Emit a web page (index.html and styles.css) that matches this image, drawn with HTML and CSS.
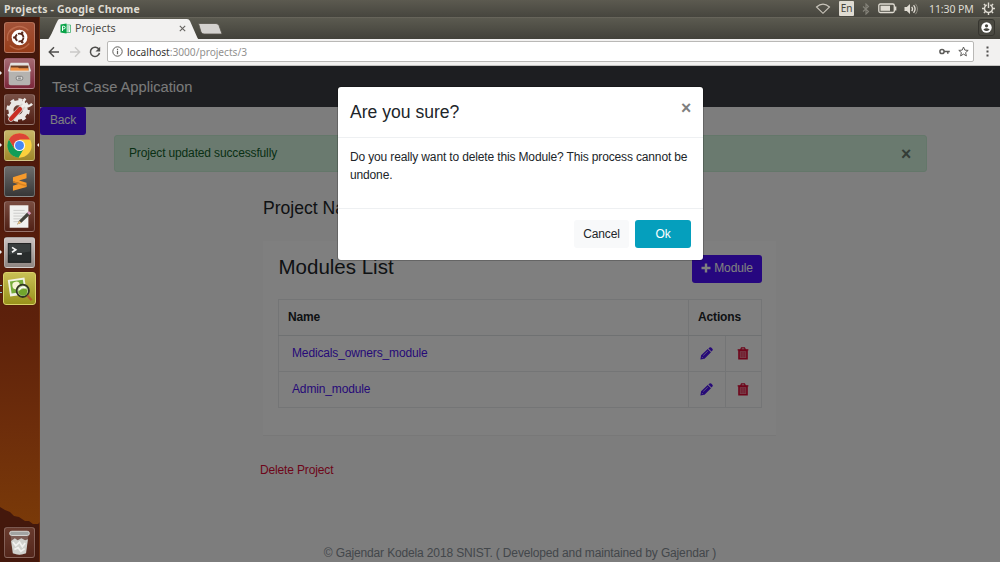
FILE: index.html
```html
<!DOCTYPE html>
<html lang="en">
<head>
<meta charset="utf-8">
<title>Projects</title>
<link rel="stylesheet" href="styles.css">
</head>
<body>
<header class="panel">
  <div class="panel-title">Projects - Google Chrome</div>
  <div class="indicators">
    <svg class="i-wifi" width="16" height="12" viewBox="0 0 16 12"><path d="M1.500 4Q8-1.800 14.500 4L8 10.300z" fill="none" stroke="#c9c5bb" stroke-width="1.100"/></svg>
    <span class="lang">En</span>
    <svg class="i-bt" width="8" height="12" viewBox="0 0 8 12"><path d="M1 3.500L6.500 8.500 4 11V1L6.500 3.500 1 8.500" fill="none" stroke="#85837a" stroke-width="1.100"/></svg>
    <svg class="i-bat" width="19" height="11" viewBox="0 0 19 11"><rect x=".8" y="1" width="15.500" height="8.500" rx="1.500" fill="none" stroke="#dfdbd2" stroke-width="1.300"/><rect x="2.500" y="2.700" width="9.500" height="5.100" fill="#dfdbd2"/><path d="M17.600 3.500v4" stroke="#dfdbd2" stroke-width="1.500"/></svg>
    <svg class="i-vol" width="15" height="12" viewBox="0 0 15 12"><path d="M.5 4h2.300L6 1v10L2.800 8H.5z" fill="#dfdbd2"/><path d="M7.700 3.800q1.700 2.200 0 4.400M9.600 2.200q3 3.800 0 7.600" fill="none" stroke="#dfdbd2" stroke-width="1.300"/><path d="M11.500.8q4 5.200 0 10.400" fill="none" stroke="#8b887e"/></svg>
    <span class="clock">11:30 PM</span>
    <svg class="i-gear" width="13" height="13" viewBox="0 0 13 13"><path d="M4.700 2.900A4 4 0 1 0 8.300 2.900" fill="none" stroke="#dfdbd2" stroke-width="1.400"/><path d="M6.500 .5v5.500M6.500 10.500V13M0 6.500h2.500M10.500 6.500H13M1.900 1.900l1.800 1.800M9.300 3.700l1.800-1.800M1.900 11.100l1.800-1.800M9.300 9.300l1.800 1.800" stroke="#dfdbd2" stroke-width="1.400"/></svg>
  </div>
</header>

<div class="desktop">
  <nav class="launcher">
    <svg class="wallpaper" width="40" height="545" viewBox="0 0 40 545" preserveAspectRatio="none">
      <defs><linearGradient id="wall" x2="0" y2="1"><stop offset="0" stop-color="#42180c"/><stop offset=".3" stop-color="#511a0c"/><stop offset=".56" stop-color="#5d210b"/><stop offset=".75" stop-color="#6d2d0b"/><stop offset=".95" stop-color="#7b3b08"/></linearGradient></defs>
      <path d="M0 0h40v545H0z" fill="url(#wall)"/><path d="M0 490l5 3 5 2 4 4 5 1 6 4 4 0 4 3 5 0 2-2v40H0z" fill="#44180c"/><path d="M39.500 0v545" stroke="#7b3c16" opacity=".6"/>
    </svg>
    <div class="tile t-dash"><svg viewBox="0 0 31 31"><path d="M5 9Q15-1 25 8M26 22Q16 33 5 24M3 19Q1 9 10 5" fill="none" stroke="#d58868" stroke-width="1.500" opacity=".5"/><circle cx="15.500" cy="15.500" r="8.400" fill="#fff"/><circle cx="15.500" cy="15.500" r="4.200" fill="none" stroke="#58281c" stroke-width="2" stroke-dasharray="7.600 1.200"/><circle cx="9.900" cy="15.500" r="1.300" fill="#58281c"/><circle cx="18.400" cy="10.500" r="1.300" fill="#58281c"/><circle cx="18.400" cy="20.500" r="1.300" fill="#58281c"/></svg></div>
    <div class="tile t-files run"><svg viewBox="0 0 31 31"><path d="M6 4h19l3 9H3z" fill="#e2e1df"/><path d="M6 7h19v7H6z" fill="#6d3d22"/><path d="M6 9h8l1 1h10v4H6z" fill="#ef9144"/><path d="M4 13h23v13q0 2-2 2H6q-2 0-2-2z" fill="#b5b3b0"/><path d="M4 13h23" stroke="#efeeec"/><rect x="12" y="18.500" width="7" height="4" rx="1.500" fill="#d7d6d4" stroke="#777"/><path d="M14 20.500h3" stroke="#666"/></svg></div>
    <div class="tile t-settings"><svg viewBox="0 0 31 31"><circle cx="14" cy="16" r="7.700" fill="none" stroke="#e9e7e5" stroke-width="5.500"/><circle cx="14" cy="16" r="10.800" fill="none" stroke="#e9e7e5" stroke-width="3.500" stroke-dasharray="4.200 4.280"/><path d="M6.500 25.500L19 12" stroke="#d5d2cf" stroke-width="6" stroke-linecap="round"/><path d="M6.500 25.500L16 15" stroke="#c92d24" stroke-width="4.500" stroke-linecap="round"/><path d="M18 13l4-4M22 4q-4 3-1 6.500t8-1" fill="none" stroke="#efeeec" stroke-width="2.800"/></svg></div>
    <div class="tile t-chrome run focus"><svg viewBox="0 0 31 31"><circle cx="15.500" cy="15.500" r="13" fill="#fbd03d"/><path d="M4.200 9A13 13 0 0 1 26.800 9H15.500L9.800 18.700z" fill="#dc4437"/><path d="M4.200 9A13 13 0 0 0 14.500 28.500l5.600-9.800H9.800z" fill="#109d58"/><circle cx="15.500" cy="15.500" r="6" fill="#f7f7f7"/><circle cx="15.500" cy="15.500" r="4.800" fill="#4587f3"/></svg></div>
    <div class="tile t-sublime"><svg viewBox="0 0 31 31"><path d="M8.500 11L23 6.500v5.500L15 14.500l8 2.300v4.700L8.500 25.500V20l8-2.500-8-2.300z" fill="#f69a2c"/><path d="M8.500 15.200l14.500 4v2L8.500 16.500z" fill="#d98320"/></svg></div>
    <div class="tile t-edit"><svg viewBox="0 0 31 31"><path d="M5 3.500h20v24H5z" fill="#f0f0ee"/><path d="M9 9h12M9 12h13M9 15h11M9 18h8M9 21h6" stroke="#c9c9c7"/><path d="M13 24l2-4 9-9 2.500 2.500-9 8.800z" fill="#44443d"/><path d="M13 24l2-4 2.500 2.300z" fill="#eac386"/><path d="M23.500 11.500l2-2 2.500 2.500-2 2z" fill="#d79abb"/></svg></div>
    <div class="tile t-term run"><svg viewBox="0 0 31 31"><rect x="3.500" y="6" width="24" height="20" fill="#292d2d" stroke="#141717"/><path d="M4 6.500h23v8L4 18z" fill="#454949" opacity=".6"/><path d="M7.500 10l4 2.500-4 2.800M13 17h5" fill="none" stroke="#f5f5f5" stroke-width="1.800"/></svg></div>
    <div class="tile t-shot run2"><svg viewBox="0 0 31 31"><g transform="rotate(-8 13 13)"><path d="M4 5h18v18H4z" fill="#f1f2e3"/><path d="M6 7h14v13H6z" fill="#76ac3b"/><circle cx="12" cy="12" r="4" fill="#f6f4d4"/></g><circle cx="19" cy="18" r="6.600" fill="#c1d49d" stroke="#303423" stroke-width="1.900"/><path d="M14 19q5-5 10-2l-1 5q-5 3-8-1z" fill="#71a52d"/><path d="M15 17q4-5 7-2" fill="none" stroke="#fff" stroke-width="1.500"/><path d="M24 23l4.500 5" stroke="#b35c2a" stroke-width="2.500"/></svg></div>
    <div class="tile t-trash"><svg viewBox="0 0 31 31"><path d="M6 8l2 19q7 3 14 0l3-19z" fill="#ada9a5" opacity=".35"/><path d="M6.500 14l4-3 3 2 4-2 4 2 3-1-2 15q-7 3-14 0z" fill="#d0d1cd"/><path d="M8.500 15l3 4 4-4 3 5 3-4M10 23l4-2 3 4 4-3" fill="none" stroke="#f1f1ef" stroke-width="1.800"/><rect x="5" y="3.500" width="21" height="4.500" rx="2.200" fill="#a2a4a2" stroke="#dcdddb"/></svg></div>
  </nav>

  <main class="browser">
    <div class="tabstrip">
      <svg class="tab-shape" width="190" height="22" viewBox="0 0 190 22"><path d="M7.500 22C11 19 15 7 18 2Q18.500 1 20 1H147Q149 1 150 3L157.500 20 159 22z" fill="#f2f1f0"/><path d="M158.500 5.500h17.500q2 0 3 2l3 8.500H164q-2 0-3-2z" fill="#d4d2cf" stroke="#555249" stroke-width=".8"/></svg>
      <div class="tab">
        <svg width="11" height="11" viewBox="0 0 11 11"><path d="M6 2h4.500v7.500H6z" fill="#fff" stroke="#25a65b" stroke-width=".7"/><path d="M.5 1.500L6.500.5v10L.5 9.500z" fill="#08a348"/><path d="M2.500 8V3.200h1.300a1.300 1.300 0 0 1 0 2.700H2.500" fill="none" stroke="#fff"/><path d="M7 4h2.500M7 6h2.500M7 8h2" stroke="#25a65b" stroke-width=".7"/></svg>
        <span class="tab-name">Projects</span>
        <svg width="7" height="7" viewBox="0 0 7 7"><path d="M.8.8l5.400 5.400M6.200.8L.8 6.200" stroke="#65635f" stroke-width="1.100"/></svg>
      </div>
      <div class="profile"><svg width="11" height="11" viewBox="0 0 11 11"><circle cx="5.500" cy="5.500" r="5.200" fill="#fff"/><circle cx="5.500" cy="3.800" r="1.600" fill="#45443d"/><path d="M2.300 7.500q3.200-2.300 6.400 0-3.200 3-6.400 0" fill="#45443d"/></svg></div>
    </div>
    <div class="toolbar">
      <svg width="12" height="12" viewBox="0 0 12 12"><path d="M11 6H1.500M6 1.300L1.300 6 6 10.700" fill="none" stroke="#4f4e4c" stroke-width="1.500"/></svg>
      <svg width="12" height="12" viewBox="0 0 12 12"><path d="M1 6h9.500M6 1.300L10.700 6 6 10.700" fill="none" stroke="#cac9c7" stroke-width="1.400"/></svg>
      <svg width="12" height="12" viewBox="0 0 12 12"><path d="M10 3.500A4.600 4.600 0 1 0 10.500 7" fill="none" stroke="#4f4e4c" stroke-width="1.500"/><path d="M11.200.8v4.700H6.500z" fill="#4f4e4c"/></svg>
      <div class="omnibox">
        <svg width="11" height="11" viewBox="0 0 11 11"><circle cx="5.500" cy="5.500" r="4.700" fill="none" stroke="#605f5c"/><path d="M5.500 4.800v3.400M5.500 2.700v1.200" stroke="#605f5c" stroke-width="1.200"/></svg>
        <span class="url"><b>localhost</b>:3000/projects/3</span>
        <svg width="11" height="7" viewBox="0 0 11 7"><circle cx="3" cy="3.500" r="2.100" fill="none" stroke="#5c5b59" stroke-width="1.500"/><path d="M5 3.500h5.800M8.800 3.500v2.300" stroke="#5c5b59" stroke-width="1.500"/></svg>
        <svg width="11" height="11" viewBox="0 0 11 11"><path d="M5.500 1l1.300 3.100 3.400.3-2.600 2.200.8 3.300-2.900-1.800-2.900 1.800.8-3.300L.8 4.400l3.400-.3z" fill="none" stroke="#5c5b59"/></svg>
      </div>
      <svg class="dots" width="3" height="11" viewBox="0 0 3 11"><path d="M.500.500h2v2h-2zM.5 4.500h2v2h-2zM.5 8.500h2v2h-2z" fill="#4f4e4c"/></svg>
    </div>

    <div class="page">
      <div class="navbar">Test Case Application</div>
      <div class="back-row"><a class="btn btn-primary back">Back</a></div>
      <div class="alert"><span>Project updated successfully</span><span class="close">×</span></div>
      <h4 class="project-name">Project Name</h4>
      <section class="card">
        <div class="card-head">
          <h3 class="card-title">Modules List</h3>
          <a class="btn btn-primary add"><svg width="10" height="10" viewBox="0 0 10 10"><path d="M5 .500v9M.5 5h9" stroke="#fff" stroke-width="2.400"/></svg>Module</a>
        </div>
        <table class="modules">
          <colgroup><col class="c-name"><col class="c-act"><col class="c-act"></colgroup>
          <thead><tr><th>Name</th><th colspan="2">Actions</th></tr></thead>
          <tbody>
            <tr><td class="name">Medicals_owners_module</td>
              <td class="act"><svg width="13" height="13" viewBox="0 0 13 13"><path d="M.4 12.600l.7-4.400 6.600-6.200 3.300 3.300-6.500 6.400zM8.400 1.400L9.500.5q.9-.6 1.700.1l1.200 1.200q.8.900 0 1.800l-.9 1z" fill="#4d13f0"/><path d="M3.200 8.500l4.600-4.300M2 10.100l1.100 1.100" stroke="#cfc2fb" stroke-width=".8"/></svg></td>
              <td class="act"><svg width="12" height="13" viewBox="0 0 12 13"><path d="M.6 2.800h10.800M3.800 2.500l.7-1.700h3l.7 1.700" fill="none" stroke="#dc0a35" stroke-width="1.300"/><path d="M2 3.500h8v8.200H2z" fill="#f08297" stroke="#dc0a35" stroke-width="1.600"/><path d="M4.200 5v5.300M6 5v5.300M7.800 5v5.300" stroke="#dc0a35" stroke-width=".7"/></svg></td></tr>
            <tr><td class="name">Admin_module</td>
              <td class="act"><svg width="13" height="13" viewBox="0 0 13 13"><path d="M.4 12.600l.7-4.400 6.600-6.200 3.300 3.300-6.500 6.400zM8.400 1.400L9.500.5q.9-.6 1.700.1l1.200 1.200q.8.900 0 1.800l-.9 1z" fill="#4d13f0"/><path d="M3.200 8.500l4.600-4.300M2 10.100l1.100 1.100" stroke="#cfc2fb" stroke-width=".8"/></svg></td>
              <td class="act"><svg width="12" height="13" viewBox="0 0 12 13"><path d="M.6 2.800h10.800M3.800 2.500l.7-1.700h3l.7 1.700" fill="none" stroke="#dc0a35" stroke-width="1.300"/><path d="M2 3.500h8v8.200H2z" fill="#f08297" stroke="#dc0a35" stroke-width="1.600"/><path d="M4.200 5v5.300M6 5v5.300M7.800 5v5.300" stroke="#dc0a35" stroke-width=".7"/></svg></td></tr>
          </tbody>
        </table>
      </section>
      <a class="delete">Delete Project</a>
      <footer class="footer">© Gajendar Kodela 2018 SNIST. ( Developed and maintained by Gajendar )</footer>

      <div class="backdrop">
        <div class="modal" role="dialog">
          <div class="modal-header"><h4>Are you sure?</h4><span class="close">×</span></div>
          <div class="modal-body">Do you really want to delete this Module? This process cannot be undone.</div>
          <div class="modal-footer"><button class="btn btn-light">Cancel</button><button class="btn btn-info">Ok</button></div>
        </div>
      </div>
    </div>
  </main>
</div>
</body>
</html>
```
FILE: styles.css
```css
* { box-sizing: border-box; }
body { margin: 0; width: 1000px; height: 562px; overflow: hidden; display: flex; flex-direction: column; font-family: "Liberation Sans", Arial, sans-serif; }
svg { display: block; flex: none; }
h3, h4 { margin: 0; font-weight: 400; }

.panel { height: 17px; flex: none; display: flex; justify-content: space-between; align-items: center; padding: 0 5px 0 4px; background: linear-gradient(#5c5a50, #46453e); color: #dfdbd2; font: 10.5px/17px "Noto Sans", sans-serif; }
.panel-title { font-weight: 700; font-size: 10.5px; letter-spacing: .18px; padding-top: 1px; }
.indicators { display: flex; align-items: center; }
.lang { margin: 0 8px 0 8px; width: 15px; height: 15px; border-radius: 1px; background: #dfdbd2; color: #45443d; line-height: 15px; text-align: center; font-size: 10px; }
.i-bat { margin-left: 8px; }
.i-vol { margin: 0 10px 0 7px; }
.clock { width: 45px; white-space: nowrap; font-size: 10.5px; letter-spacing: -.1px; padding-top: 1px; }
.i-gear { margin-left: 8px; }

.desktop { flex: 1; display: flex; min-height: 0; }
.launcher { width: 40px; position: relative; display: flex; flex-direction: column; gap: 4.900px; padding: 5px 0 4px 4px; }
.wallpaper { position: absolute; left: 0; top: 0; }
.tile { width: 31px; height: 31px; flex: none; position: relative; border-radius: 3px; border: 1px solid rgba(255,255,255,.23); box-shadow: 0 0 1px rgba(0,0,0,.6); }
.tile svg { width: 29px; height: 29px; }
.t-dash { background: linear-gradient(#a35238, #973d19); }
.t-files { background: linear-gradient(#a56a72, #7c263a); }
.t-settings { background: linear-gradient(#795147, #501d13); }
.t-chrome { background: linear-gradient(#c8b668, #9f8729); }
.t-sublime { background: linear-gradient(#6c6c6b, #373737); }
.t-edit { background: linear-gradient(#794c40, #502015); }
.t-term { background: linear-gradient(#cac3c1, #8f8682); }
.t-shot { width: 33px; height: 33px; margin: -1px 0 0 -1px; padding: 1px; background: linear-gradient(#c9c055, #98921b); border-color: #d9d268; }
.t-trash { margin-top: auto; background: linear-gradient(#693b2e, #54261b); }
.run::before, .run2::before { content: ""; position: absolute; left: -5px; top: 12px; border: 2.500px solid transparent; border-left-color: #eee; border-right: 0; }
.run2::before { left: -4px; border: 0; width: 2px; height: 6px; border-top: 1.500px solid #8ec9da; border-bottom: 1.500px solid #8ec9da; }
.focus::after { content: ""; position: absolute; right: -5px; top: 12px; border: 2.500px solid transparent; border-right-color: #eee; border-left: 0; }

.browser { flex: 1; display: flex; flex-direction: column; min-width: 0; }
.tabstrip { height: 22px; flex: none; position: relative; display: flex; justify-content: space-between; background: linear-gradient(#5b5a50, #42413a); border-top: 1px solid #66645a; }
.tab-shape { position: absolute; left: 0; top: 0; }
.tab { position: relative; display: flex; align-items: center; padding-left: 20px; width: 146px; font: 10.700px/20px "Noto Sans", sans-serif; color: #4b4a47; }
.tab-name { flex: 1; padding: 0 0 1px 4px; letter-spacing: .1px; }
.profile { width: 17px; height: 17px; margin: 1px 5px 0 0; border: 1px solid #36352f; border-radius: 3px; display: grid; place-items: center; background: #4a4941; }
.toolbar { height: 27px; flex: none; display: flex; align-items: center; gap: 8.500px; padding: 0 11px 1px 8px; background: #f2f1f0; border-bottom: 1px solid #c4c3c1; }
.omnibox { flex: 1; height: 21px; display: flex; align-items: center; gap: 8px; padding: 0 4px; margin: 0 4px 0 -3px; border: 1px solid #b9b8b6; border-radius: 2px; background: #fff; }
.url { flex: 1; margin-left: -3.500px; color: #92918f; font: 10.200px/18px "Noto Sans", sans-serif; letter-spacing: -.03px; }
.url b { font-weight: 400; color: #363533; }

.page { flex: 1; position: relative; overflow: hidden; background: #fafafa; color: #212529; font-size: 12px; letter-spacing: -.145px; line-height: 17.570px; display: flex; flex-direction: column; }
.navbar { height: 41px; flex: none; padding-left: 12px; background: #3a3d43; color: #f4f4f4; font-size: 14.700px; letter-spacing: 0; line-height: 42px; }
.btn { display: inline-flex; align-items: center; justify-content: center; height: 28px; border: 0; border-radius: 3px; padding: 0 0 1px; font: 12px/17px "Liberation Sans", Arial, sans-serif; letter-spacing: -.145px; }
.btn-primary { background: #4d0ffe; color: #fff; }
.back-row { height: 28px; flex: none; display: flex; }
.back { width: 46px; }
.alert { flex: none; height: 37px; width: 813px; margin-left: 74px; padding: 0 15px 0 14px; display: flex; align-items: center; justify-content: space-between; border: 1px solid #c8eed4; border-radius: 3px; background: #d4f5df; color: #12602a; }
.close { font-size: 17.570px; line-height: 18px; font-weight: 700; color: #7f7f7f; }
.alert .close { color: #6a7a6f; }
.project-name { margin: 26px 0 0 223px; font-size: 17.570px; line-height: 21px; letter-spacing: 0; }
.card { flex: none; width: 513px; height: 195px; margin: 22px 0 0 223px; padding: 14px 14px 0 15px; background: #fff; border-bottom: 1px solid #f0f0f0; }
.card-head { display: flex; justify-content: space-between; height: 44px; }
.card-title { padding-left: .5px; font-size: 20.500px; line-height: 23px; letter-spacing: 0; }
.add { width: 70px; gap: 3px; padding-bottom: 2px; }
.modules { width: 484px; height: 109px; table-layout: fixed; border-collapse: collapse; }
.c-name { width: 410px; }
.modules th, .modules td { border: 1px solid #e8eaec; padding: 1px 9px 0; height: 36px; text-align: left; }
.modules th { border-bottom-color: #dfe2e4; }
.modules .name { padding-left: 13px; color: #4d13f0; }
.act svg { margin: 0 auto; }
.modules .act { padding: 0 0 1px; }
.delete { margin: 26px 0 0 220px; color: #dc0a35; }
.footer { position: absolute; left: 0; right: 0; bottom: -1px; height: 18px; text-align: center; color: #868e96; }

.backdrop { position: absolute; inset: 0; background: rgba(0,0,0,.5); display: flex; justify-content: center; align-items: flex-start; padding: 21px 0 0 1px; }
.modal { width: 365px; height: 173px; background: #fff; border-radius: 3px; display: flex; flex-direction: column; box-shadow: 0 0 0 1px rgba(0,0,0,.2); }
.modal-header { height: 51px; display: flex; justify-content: space-between; padding: 12px 12px 0; border-bottom: 1px solid #eef0f2; }
.modal-header h4 { font-size: 17.570px; line-height: 26px; letter-spacing: 0; }
.modal-body { flex: 1; padding: 11px 12px; }
.modal-footer { height: 52px; display: flex; justify-content: flex-end; gap: 6px; padding: 11px 12px 0; border-top: 1px solid #eef0f2; }
.modal-footer .btn { padding-bottom: 0; }
.btn-light { width: 55px; background: #f8f9fa; color: #212529; }
.btn-info { width: 56px; background: #059fbd; color: #fff; }
```
